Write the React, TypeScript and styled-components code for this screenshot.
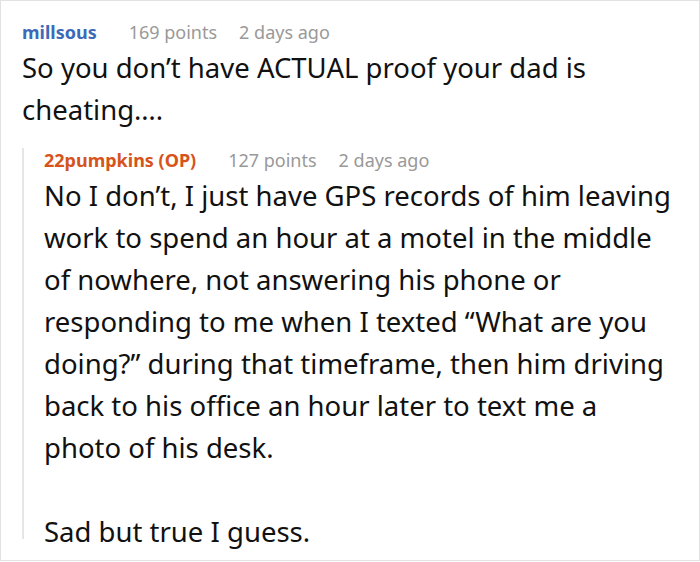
import React from "react";
import styled, { createGlobalStyle } from "styled-components";

const GlobalStyle = createGlobalStyle`
  html, body {
    margin: 0;
    padding: 0;
    background: #fff;
  }
  body {
    font-family: "Noto Sans", "Open Sans", sans-serif;
    color: #111;
  }
`;

const Frame = styled.div`
  box-sizing: border-box;
  width: 700px;
  height: 561px;
  border: 1px solid #e2e2e2;
  padding: 19px 0 0 21px;
  overflow: hidden;
`;

const Meta = styled.div`
  display: flex;
  align-items: center;
  height: 24px;
  font-size: 18px;
  line-height: 24px;
  white-space: nowrap;
`;

const Author = styled.span<{ $op?: boolean }>`
  font-weight: 700;
  color: ${({ $op }) => ($op ? "#d6531c" : "#3a6ab8")};
  margin-right: 32px;
`;

const Points = styled.span`
  color: #999;
  margin-right: 22px;
`;

const Time = styled.span`
  color: #999;
`;

const Body = styled.p`
  margin: 3px 0 0;
  font-size: 27.5px;
  line-height: 42px;
  white-space: pre-line;
`;

const Reply = styled.div`
  margin-top: 23px;
  border-left: 2px solid #e6e6e6;
  padding-left: 20px;
  height: 391px;

  ${Meta} {
    margin-top: -6px;
  }

  ${Body} {
    margin-top: 3px;
  }
`;

export default function App() {
  return (
    <>
      <GlobalStyle />
      <Frame>
        <Meta>
          <Author>millsous</Author>
          <Points>169 points</Points>
          <Time>2 days ago</Time>
        </Meta>
        <Body>
          So you don’t have ACTUAL proof your dad is{"\n"}cheating….
        </Body>
        <Reply>
          <Meta>
            <Author $op>22pumpkins (OP)</Author>
            <Points>127 points</Points>
            <Time>2 days ago</Time>
          </Meta>
          <Body>
            {"No I don’t, I just have GPS records of him leaving\nwork to spend an hour at a motel in the middle\nof nowhere, not answering his phone or\nresponding to me when I texted “What are you\ndoing?” during that timeframe, then him driving\nback to his office an hour later to text me a\nphoto of his desk.\n\nSad but true I guess."}
          </Body>
        </Reply>
      </Frame>
    </>
  );
}
